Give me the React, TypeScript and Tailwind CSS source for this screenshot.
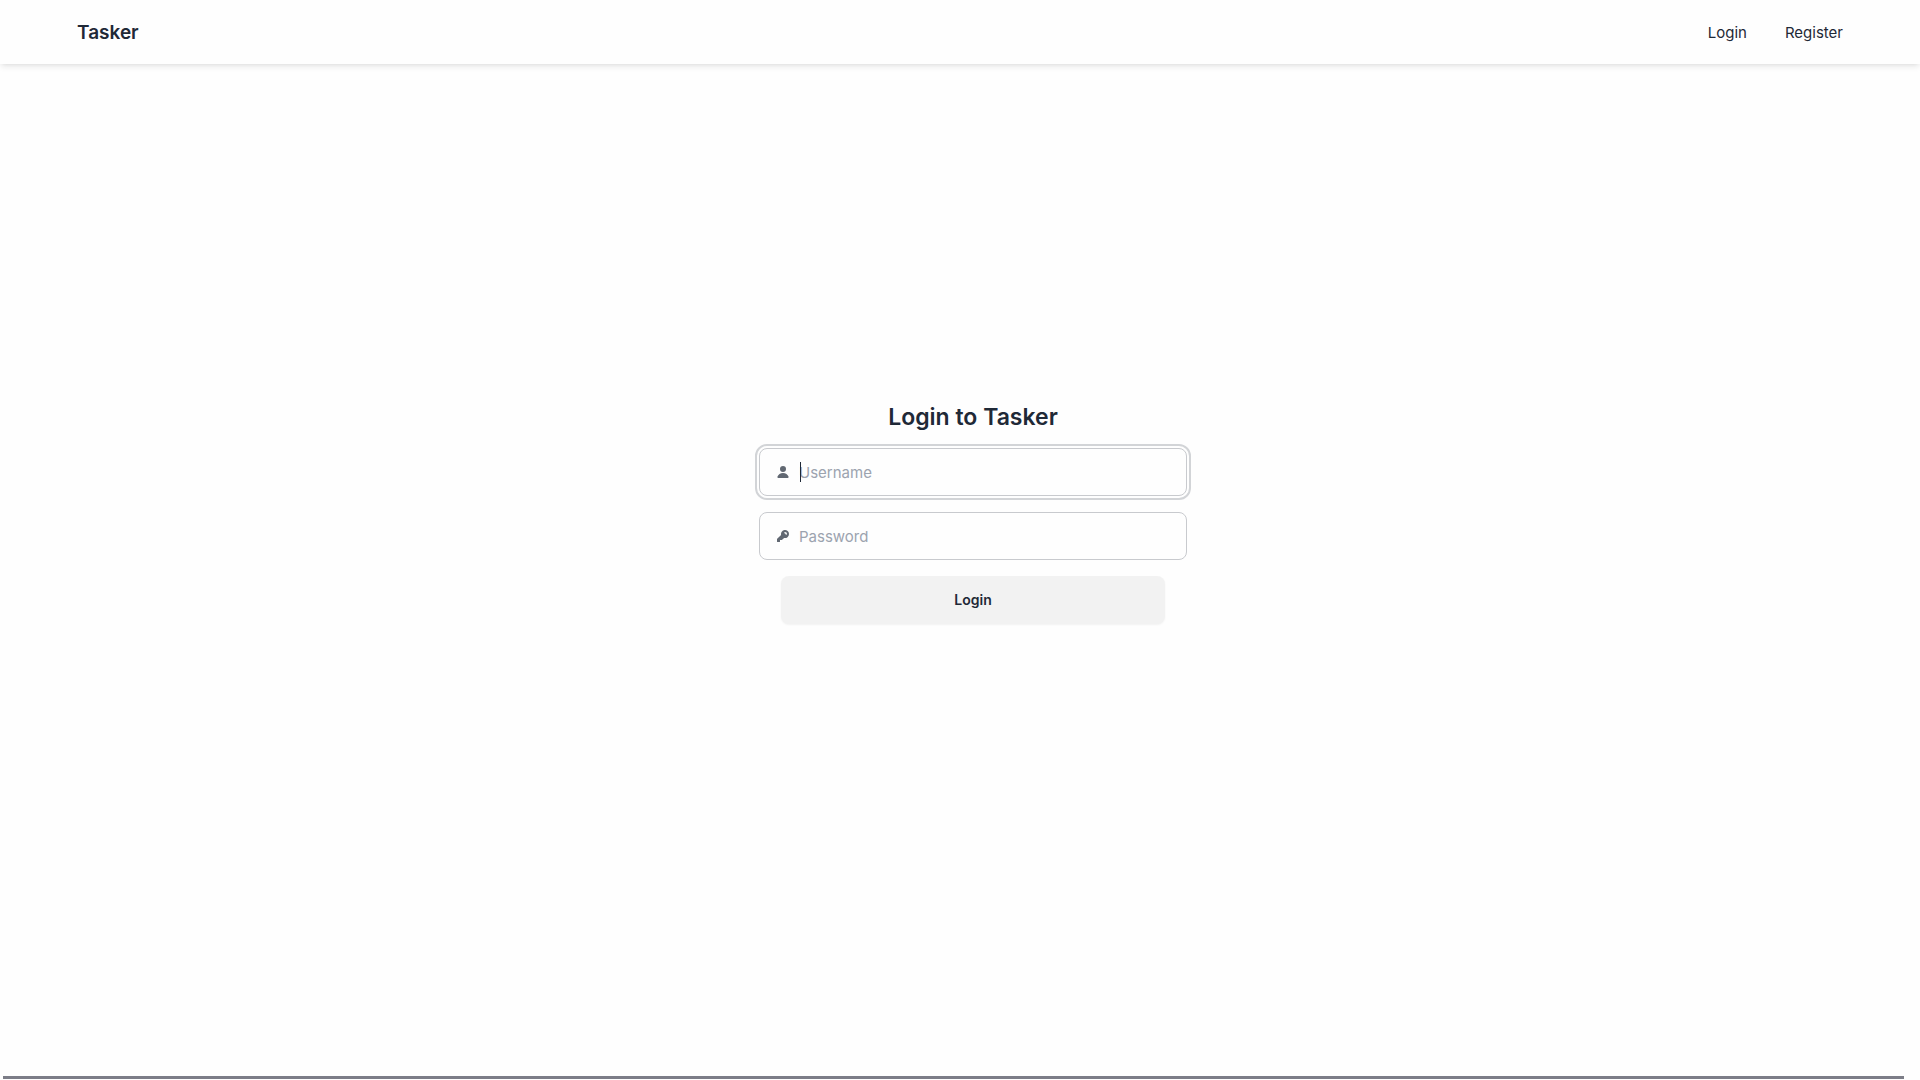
import type { ReactNode } from "react";

function Field({
  id,
  label,
  type,
  focused,
  icon,
}: {
  id: string;
  label: string;
  type: string;
  focused?: boolean;
  icon: ReactNode;
}) {
  return (
    <label
      htmlFor={id}
      className={
        "flex h-12 w-full items-center gap-2 rounded-lg border border-[#c8cace] pr-4 pl-[15px] " +
        (focused ? "outline-2 outline-offset-2 outline-[#d2d4d7]" : "")
      }
    >
      <svg viewBox="0 0 16 16" fill="currentColor" className="size-4 shrink-0 opacity-70" aria-hidden="true">
        {icon}
      </svg>
      <span className="relative flex grow items-center">
        {focused && <span className="absolute left-px h-5 w-px bg-[#1f2937]" />}
        <input
          id={id}
          type={type}
          aria-label={label}
          placeholder={label}
          className="w-full bg-transparent pt-0.5 text-[15px] leading-6 outline-none placeholder:text-[#9ca3af]"
        />
      </span>
    </label>
  );
}

export default function App() {
  return (
    <div className="flex min-h-screen flex-col bg-[#fefefe] font-['Inter',sans-serif] text-[#1f2937]">
      <header className="flex h-16 items-center justify-between px-[77px] pt-0.5 shadow-[0_4px_6px_-1px_rgba(0,0,0,0.08),0_2px_4px_-2px_rgba(0,0,0,0.08)]">
        <a href="#" className="text-[19px] leading-7 font-semibold">
          Tasker
        </a>
        <nav className="flex items-center gap-[38px] text-[15px] leading-6">
          <a href="#">Login</a>
          <a href="#">Register</a>
        </nav>
      </header>
      <main className="flex grow items-center justify-center pb-30 pl-[26px]">
        <form className="flex w-[428px] max-w-full flex-col items-center gap-4">
          <h1 className="pt-0.5 text-[23px] leading-[30px] font-semibold">Login to Tasker</h1>
          <Field
            id="username"
            label="Username"
            type="text"
            focused
            icon={
              <path d="M8 8a3 3 0 1 0 0-6 3 3 0 0 0 0 6ZM12.735 14c.618 0 1.093-.561.872-1.139a6.002 6.002 0 0 0-11.215 0c-.22.578.254 1.139.872 1.139h9.47Z" />
            }
          />
          <Field
            id="password"
            label="Password"
            type="password"
            icon={
              <path
                fillRule="evenodd"
                clipRule="evenodd"
                d="M14 6a4 4 0 0 1-4.899 3.899l-1.955 1.955a.5.5 0 0 1-.353.146H5v1.5a.5.5 0 0 1-.5.5h-2a.5.5 0 0 1-.5-.5v-2.293a.5.5 0 0 1 .146-.353l3.955-3.955A4 4 0 1 1 14 6Zm-4-2a.75.75 0 0 0 0 1.5.5.5 0 0 1 .5.5.75.75 0 0 0 1.5 0 2 2 0 0 0-2-2Z"
              />
            }
          />
          <button
            type="button"
            className="h-12 w-96 max-w-full rounded-lg bg-[#f2f2f2] text-sm font-semibold shadow-[0_1px_2px_rgba(0,0,0,0.05)]"
          >
            Login
          </button>
        </form>
      </main>
      <div className="fixed bottom-px left-[3px] right-4 h-[3px] bg-[#7c7d87]" />
    </div>
  );
}
